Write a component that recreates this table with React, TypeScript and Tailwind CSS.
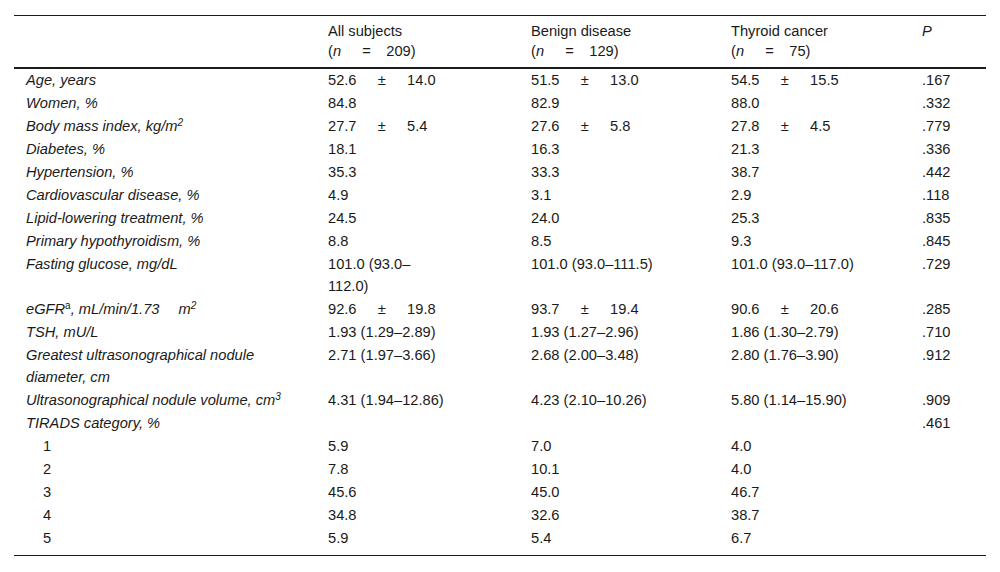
import React from "react";

type Row = {
  label: React.ReactNode;
  cells: React.ReactNode[];
  p?: string;
  sub?: boolean;
};

const pmGap = <span className="inline-block w-[1.45em]" />;

function pm(a: string, b: string) {
  return (
    <span className="whitespace-nowrap">
      {a}
      {pmGap}±{pmGap}
      {b}
    </span>
  );
}

function nCount(v: string) {
  return (
    <span className="whitespace-nowrap">
      (<i>n</i>
      <span className="inline-block w-[1.45em]" />=<span className="inline-block w-[1.05em]" />
      {v})
    </span>
  );
}

const rows: Row[] = [
  { label: "Age, years", cells: [pm("52.6", "14.0"), pm("51.5", "13.0"), pm("54.5", "15.5")], p: ".167" },
  { label: "Women, %", cells: ["84.8", "82.9", "88.0"], p: ".332" },
  {
    label: (
      <>
        Body mass index, kg/m<sup className="text-[10px]">2</sup>
      </>
    ),
    cells: [pm("27.7", "5.4"), pm("27.6", "5.8"), pm("27.8", "4.5")],
    p: ".779",
  },
  { label: "Diabetes, %", cells: ["18.1", "16.3", "21.3"], p: ".336" },
  { label: "Hypertension, %", cells: ["35.3", "33.3", "38.7"], p: ".442" },
  { label: "Cardiovascular disease, %", cells: ["4.9", "3.1", "2.9"], p: ".118" },
  { label: "Lipid-lowering treatment, %", cells: ["24.5", "24.0", "25.3"], p: ".835" },
  { label: "Primary hypothyroidism, %", cells: ["8.8", "8.5", "9.3"], p: ".845" },
  {
    label: "Fasting glucose, mg/dL",
    cells: ["101.0 (93.0–112.0)", "101.0 (93.0–111.5)", "101.0 (93.0–117.0)"],
    p: ".729",
  },
  {
    label: (
      <>
        eGFR<sup className="not-italic text-[10px]">a</sup>, mL/min/1.73
        <span className="inline-block w-[1.3em]" />m<sup className="text-[10px]">2</sup>
      </>
    ),
    cells: [pm("92.6", "19.8"), pm("93.7", "19.4"), pm("90.6", "20.6")],
    p: ".285",
  },
  { label: "TSH, mU/L", cells: ["1.93 (1.29–2.89)", "1.93 (1.27–2.96)", "1.86 (1.30–2.79)"], p: ".710" },
  {
    label: "Greatest ultrasonographical nodule diameter, cm",
    cells: ["2.71 (1.97–3.66)", "2.68 (2.00–3.48)", "2.80 (1.76–3.90)"],
    p: ".912",
  },
  {
    label: (
      <>
        Ultrasonographical nodule volume, cm<sup className="text-[10px]">3</sup>
      </>
    ),
    cells: ["4.31 (1.94–12.86)", "4.23 (2.10–10.26)", "5.80 (1.14–15.90)"],
    p: ".909",
  },
  { label: "TIRADS category, %", cells: ["", "", ""], p: ".461" },
  { label: "1", cells: ["5.9", "7.0", "4.0"], sub: true },
  { label: "2", cells: ["7.8", "10.1", "4.0"], sub: true },
  { label: "3", cells: ["45.6", "45.0", "46.7"], sub: true },
  { label: "4", cells: ["34.8", "32.6", "38.7"], sub: true },
  { label: "5", cells: ["5.9", "5.4", "6.7"], sub: true },
];

export default function App() {
  const last = rows.length - 1;
  return (
    <div className="h-[572px] w-[1000px] bg-white pt-[15px] font-['Liberation_Sans',Arial,sans-serif] text-[14.67px] text-[#1a1a1a]">
      <table className="mx-[14px] w-[972px] table-fixed border-collapse">
        <colgroup>
          <col className="w-[302px]" />
          <col className="w-[203px]" />
          <col className="w-[200px]" />
          <col className="w-[191px]" />
          <col className="w-[76px]" />
        </colgroup>
        <thead>
          <tr className="border-t border-b-2 border-[#1a1a1a] align-top leading-[20px]">
            <th className="pb-[6px] pl-3 pt-[5px] text-left font-normal" />
            <th className="pb-[6px] pl-3 pt-[5px] text-left font-normal">
              All subjects
              <br />
              {nCount("209")}
            </th>
            <th className="pb-[6px] pl-3 pt-[5px] text-left font-normal">
              Benign disease
              <br />
              {nCount("129")}
            </th>
            <th className="pb-[6px] pl-3 pt-[5px] text-left font-normal">
              Thyroid cancer
              <br />
              {nCount("75")}
            </th>
            <th className="pb-[6px] pl-3 pt-[5px] text-left font-normal italic">P</th>
          </tr>
        </thead>
        <tbody className="leading-[22px]">
          {rows.map((r, i) => {
            const pad = i === last ? "pb-[6px]" : "pb-px";
            return (
              <tr key={i} className={`align-top ${i === last ? "border-b border-[#1a1a1a]" : ""}`}>
                <td className={`pr-3 ${pad} ${r.sub ? "pl-[29px]" : "pl-3 italic"}`}>
                  <span className="[&_sup]:leading-none">{r.label}</span>
                </td>
                {r.cells.map((c, j) => (
                  <td key={j} className={`pl-3 ${pad}`}>
                    <div className={j === 0 ? "max-w-[120px]" : ""}>{c}</div>
                  </td>
                ))}
                <td className={`pl-3 ${pad}`}>{r.p}</td>
              </tr>
            );
          })}
        </tbody>
      </table>
    </div>
  );
}
